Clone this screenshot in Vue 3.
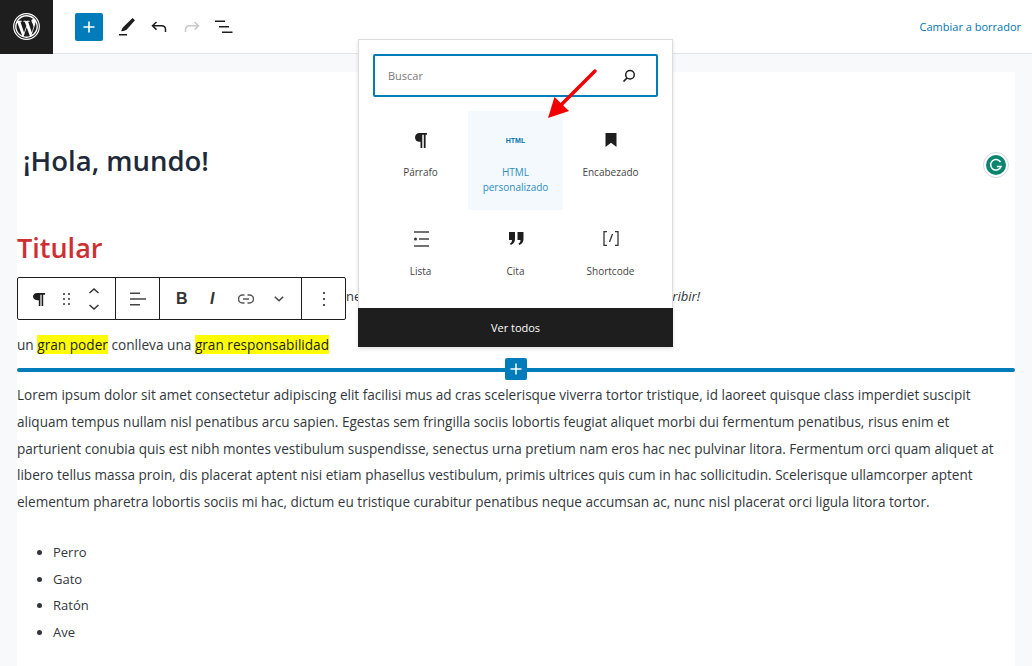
<script setup>
const blocks = [
  { label: "Párrafo", icon: "para" },
  { label: "HTML personalizado", icon: "html", active: true },
  { label: "Encabezado", icon: "bookmark" },
  { label: "Lista", icon: "list" },
  { label: "Cita", icon: "quote" },
  { label: "Shortcode", icon: "short" },
]
const animals = ["Perro", "Gato", "Ratón", "Ave"]
</script>

<template>
  <div class="page">
    <header class="topbar">
      <div class="wp-logo">
        <svg width="27" height="27" viewBox="0 0 28 28">
          <circle cx="14" cy="14" r="13.300" fill="none" stroke="#fff" stroke-width="1.200" />
          <circle cx="14" cy="14" r="11.800" fill="#fff" />
          <path fill="#1e1e1e" d="M3.600 14c0 4.100 2.400 7.700 5.900 9.400L4.500 9.800C3.900 11.100 3.600 12.500 3.600 14zM21 13.500c0-1.300-.5-2.200-.9-2.900-.5-.9-1-1.600-1-2.500 0-1 .8-1.900 1.800-1.900h.1C19 4.400 16.600 3.500 14 3.500c-3.600 0-6.800 1.900-8.700 4.700h.7c1.100 0 2.800-.1 2.800-.1.600 0 .6.800.1.900 0 0-.6.100-1.200.1l3.800 11.300 2.300-6.900-1.600-4.400c-.6 0-1.100-.1-1.100-.1-.6 0-.5-.9.100-.9 0 0 1.700.1 2.800.1s2.800-.1 2.800-.1c.6 0 .6.800.1.900 0 0-.6.100-1.200.1l3.800 11.200 1-3.500c.5-1.400.8-2.400.8-3.300zM14.200 14.900l-3.100 9.100c.9.300 1.900.4 2.900.4 1.200 0 2.400-.2 3.500-.6l-.1-.1-3.200-8.800zM23.100 9c0 .3.100.7.100 1.100 0 1-.2 2.200-.8 3.600l-3.200 9.200c3.100-1.800 5.200-5.200 5.200-9 0-1.800-.5-3.500-1.300-4.900z" />
        </svg>
      </div>
      <div class="tools">
        <button class="add-btn">
          <svg width="14" height="14" viewBox="0 0 14 14"><path d="M7 1.500v11M1.500 7h11" stroke="#fff" stroke-width="1.600" /></svg>
        </button>
        <svg class="tool tool-pen" width="18" height="20" viewBox="0 0 18 20">
          <path fill="#1e1e1e" d="M14.500 1 17 3.200 8.600 12.800 5.600 14 3.200 14.200 4 11.800 5.600 9.700z" />
          <rect x="1" y="17" width="8" height="1.500" fill="#1e1e1e" />
        </svg>
        <svg class="tool tool-undo" width="16" height="12" viewBox="0 0 16 12">
          <path fill="none" stroke="#1e1e1e" stroke-width="1.500" d="M5.500 1 1.500 4.800 5.500 8.600M1.500 4.800h9c2.300 0 4 1.600 4 3.800V11" />
        </svg>
        <svg class="tool tool-redo" width="16" height="12" viewBox="0 0 16 12">
          <path fill="none" stroke="#c9c9c9" stroke-width="1.500" d="M10.500 1 14.500 4.800 10.500 8.600M14.500 4.800h-9c-2.300 0-4 1.600-4 3.800V11" />
        </svg>
        <svg class="tool tool-outline" width="18" height="14" viewBox="0 0 18 14">
          <path stroke="#1e1e1e" stroke-width="1.500" d="M0 1.300h10M4 6.700h10M7 12.200h10.500" />
        </svg>
      </div>
      <a class="draft">Cambiar a borrador</a>
    </header>

    <main class="canvas">
      <article class="sheet">
        <h1 class="post-title">¡Hola, mundo!</h1>
        <h2 class="heading">Titular</h2>
        <p class="hidden-line"><span>ne</span><em>ribir!</em></p>
        <p class="marked">un <mark>gran poder</mark> conlleva una <mark>gran responsabilidad</mark></p>
        <div class="divider">
          <button class="inline-add">
            <svg width="12" height="12" viewBox="0 0 12 12"><path d="M6 .5v11M.5 6h11" stroke="#fff" stroke-width="1.500" /></svg>
          </button>
        </div>
        <p class="lorem">Lorem ipsum dolor sit amet consectetur adipiscing elit facilisi mus ad cras scelerisque viverra tortor tristique, id laoreet quisque class imperdiet suscipit aliquam tempus nullam nisl penatibus arcu sapien. Egestas sem fringilla sociis lobortis feugiat aliquet morbi dui fermentum penatibus, risus enim et parturient conubia quis est nibh montes vestibulum suspendisse, senectus urna pretium nam eros hac nec pulvinar litora. Fermentum orci quam aliquet at libero tellus massa proin, dis placerat aptent nisi etiam phasellus vestibulum, primis ultrices quis cum in hac sollicitudin. Scelerisque ullamcorper aptent elementum pharetra lobortis sociis mi hac, dictum eu tristique curabitur penatibus neque accumsan ac, nunc nisl placerat orci ligula litora tortor.</p>
        <ul class="animals">
          <li v-for="a in animals" :key="a">{{ a }}</li>
        </ul>

        <div class="grammarly">
          <svg width="20" height="20" viewBox="0 0 20 20">
            <circle cx="10" cy="10" r="10" fill="#0b8570" />
            <path fill="none" stroke="#fff" stroke-width="1.500" d="M14.500 7A5.300 5.300 0 1 0 15 11.500H10.800" />
          </svg>
        </div>
      </article>
    </main>

    <div class="block-toolbar">
      <div class="tb-group tb-first">
        <svg width="14" height="14" viewBox="0 0 14 14"><path fill="#1e1e1e" d="M5 1h8v1.700h-1.800V14H9.600V2.700H8.400V14H6.800V8.200H5C2.800 8.200 1 6.600 1 4.600S2.800 1 5 1z" /></svg>
        <svg width="8" height="14" viewBox="0 0 8 14"><path fill="#666" d="M0 1h2v2H0zM5 1h2v2H5zM0 6h2v2H0zM5 6h2v2H5zM0 11h2v2H0zM5 11h2v2H5z" /></svg>
        <svg width="12" height="24" viewBox="0 0 12 24"><path fill="none" stroke="#333" stroke-width="1.500" d="M1.500 6 6 2l4.500 4M1.500 18 6 22l4.500-4" /></svg>
      </div>
      <div class="tb-group tb-align">
        <svg width="16" height="14" viewBox="0 0 16 14"><path stroke="#444" stroke-width="1.500" d="M0 1.200h10M0 7h16M0 12.800h10" /></svg>
      </div>
      <div class="tb-group tb-format">
        <span class="fmt-b">B</span>
        <span class="fmt-i">I</span>
        <svg width="16" height="10" viewBox="0 0 16 10"><path fill="none" stroke="#555" stroke-width="1.500" d="M6.500 1H4.500a4 4 0 0 0 0 8h2M9.500 1h2a4 4 0 0 1 0 8h-2M5 5h6" /></svg>
        <svg width="10" height="6" viewBox="0 0 10 6"><path fill="none" stroke="#444" stroke-width="1.500" d="M.8.800 5 4.800 9.200.800" /></svg>
      </div>
      <div class="tb-group tb-more">
        <svg width="4" height="14" viewBox="0 0 4 14"><path fill="#555" d="M1 0h2v2H1zM1 6h2v2H1zM1 12h2v2H1z" /></svg>
      </div>
    </div>

    <div class="inserter">
      <div class="search">
        <span class="placeholder">Buscar</span>
        <svg width="14" height="14" viewBox="0 0 14 14"><circle cx="8" cy="5.700" r="4.300" fill="none" stroke="#1e1e1e" stroke-width="1.500" /><path stroke="#1e1e1e" stroke-width="1.700" d="M5 9 1.500 12.500" /></svg>
      </div>
      <div class="block-grid">
        <div v-for="b in blocks" :key="b.label" class="block-item" :class="{ active: b.active }">
          <div class="block-icon">
            <svg v-if="b.icon === 'para'" width="14" height="17" viewBox="0 0 14 17"><path fill="#1e1e1e" d="M5.500 1H13v1.700h-1.400V16H9.800V2.700H8.300V16H6.500V9.800h-1C3 9.800 1 7.900 1 5.400S3 1 5.500 1z" /></svg>
            <span v-else-if="b.icon === 'html'" class="html-icon">HTML</span>
            <svg v-else-if="b.icon === 'bookmark'" width="12" height="14" viewBox="0 0 12 14"><path fill="#1e1e1e" d="M.5 0h11v14L6 9.800.5 14z" /></svg>
            <svg v-else-if="b.icon === 'list'" width="16" height="16" viewBox="0 0 16 16"><path stroke="#444" stroke-width="1.300" d="M1 1h15M6 8h10M1 15h15" /><circle cx="2.500" cy="8" r="1.500" fill="#333" /></svg>
            <svg v-else-if="b.icon === 'quote'" width="16" height="14" viewBox="0 0 16 14"><path fill="#1e1e1e" d="M1 0h6v7c0 3-1.500 5-4.200 6l-.8-1.400C3.300 11 4 9.800 4 8H1zM9.500 0h6v7c0 3-1.500 5-4.200 6l-.8-1.400c1.300-.6 2-1.800 2-3.600h-3z" /></svg>
            <svg v-else width="16" height="15" viewBox="0 0 16 15"><path fill="none" stroke="#333" stroke-width="1.300" d="M4 .7H1v13.600h3M12 .7h3v13.600h-3M9.500 3 6.500 11" /></svg>
          </div>
          <div class="block-label">{{ b.label }}</div>
        </div>
      </div>
      <div class="see-all">Ver todos</div>
    </div>

    <svg class="red-arrow" width="54" height="54" viewBox="0 0 54 54">
      <path stroke="#f20000" stroke-width="3.500" stroke-linecap="round" d="M49 3 14 38" />
      <path fill="#f20000" d="M2 50 8.500 29 23 43z" />
    </svg>
  </div>
</template>

<style>
html, body {
  margin: 0;
  background: #f8f9fb;
}
</style>

<style scoped>
.page {
  position: relative;
  width: 1032px;
  height: 666px;
  overflow: hidden;
  background: #f8f9fb;
  font-family: "Open Sans", "Noto Sans", sans-serif;
  color: #32373c;
}

.topbar {
  display: flex;
  align-items: center;
  height: 53px;
  background: #fff;
  border-bottom: 1px solid #e2e4e7;
}

.wp-logo {
  display: flex;
  align-items: center;
  justify-content: center;
  width: 53px;
  height: 54px;
  background: #1e1e1e;
}

.tools {
  display: flex;
  align-items: center;
  margin-left: 22px;
}

.add-btn {
  display: flex;
  align-items: center;
  justify-content: center;
  width: 28px;
  height: 28px;
  padding: 0;
  border: 0;
  border-radius: 2px;
  background: #007cba;
}

.tool-pen { margin-left: 15px; }
.tool-undo { margin-left: 15px; }
.tool-redo { margin-left: 17px; }
.tool-outline { margin-left: 15px; }

.draft {
  margin-left: auto;
  margin-right: 11px;
  font-size: 11px;
  color: #0075af;
}

.canvas {
  padding: 18px 17px 0;
}

.sheet {
  position: relative;
  height: 600px;
  background: #fff;
}

.post-title {
  margin: 0;
  padding: 71px 0 0 6px;
  font-size: 27.500px;
  line-height: 36px;
  font-weight: 600;
  color: #1e2a3a;
}

.heading {
  margin: 0;
  padding-top: 50px;
  font-size: 27px;
  line-height: 38px;
  font-weight: 600;
  color: #cd2f33;
}

.hidden-line {
  display: flex;
  justify-content: space-between;
  margin: 0;
  padding: 20px 315px 0 329px;
  font-size: 13px;
  line-height: 18px;
  white-space: nowrap;
}

.marked {
  margin: 0;
  padding-top: 31px;
  font-size: 13.650px;
  line-height: 18px;
}

mark {
  background: #ffff00;
  color: #222;
}

.divider {
  position: relative;
  height: 4px;
  margin-top: 14px;
  background: #007cba;
  border-radius: 2px;
}

.inline-add {
  position: absolute;
  left: 488px;
  top: -10px;
  display: flex;
  align-items: center;
  justify-content: center;
  width: 22px;
  height: 22px;
  padding: 0;
  border: 0;
  border-radius: 2px;
  background: #007cba;
}

.lorem {
  margin: 0;
  padding: 10px 15px 0 0;
  font-size: 13.550px;
  line-height: 26.800px;
}

.animals {
  margin: 23px 0 0;
  padding-left: 36px;
  font-size: 13px;
  line-height: 26.600px;
}

.grammarly {
  position: absolute;
  left: 966px;
  top: 80px;
  display: flex;
  align-items: center;
  justify-content: center;
  width: 26px;
  height: 26px;
  box-sizing: border-box;
  border: 1px solid #d5d8e2;
  border-radius: 50%;
  background: #fff;
}

.block-toolbar {
  position: absolute;
  left: 17px;
  top: 277px;
  display: flex;
  height: 43px;
  box-sizing: border-box;
  border: 1px solid #1e1e1e;
  border-radius: 2px;
  background: #fff;
}

.tb-group {
  display: flex;
  align-items: center;
  box-sizing: border-box;
  border-right: 1px solid #1e1e1e;
}

.tb-group:last-child {
  border-right: 0;
}

.tb-first {
  width: 98px;
  padding-left: 14px;
  gap: 17px;
}

.tb-align {
  width: 44px;
  justify-content: center;
}

.tb-format {
  width: 142px;
  padding-left: 16px;
}

.fmt-b {
  width: 34px;
  font-family: "Liberation Sans", sans-serif;
  font-size: 16px;
  font-weight: 700;
  color: #333;
}

.fmt-i {
  width: 28px;
  font-family: "Liberation Sans", sans-serif;
  font-size: 16px;
  font-weight: 700;
  font-style: italic;
  color: #333;
}

.tb-format svg:last-child {
  margin-left: 20px;
}

.tb-more {
  width: 43px;
  justify-content: center;
}

.inserter {
  position: absolute;
  left: 358px;
  top: 39px;
  width: 315px;
  height: 308px;
  box-sizing: border-box;
  display: flex;
  flex-direction: column;
  border: 1px solid #dcdcde;
  background: #fff;
  box-shadow: 0 2px 4px rgba(0, 0, 0, 0.12);
}

.search {
  display: flex;
  align-items: center;
  justify-content: space-between;
  margin: 14px 14px 0 14px;
  height: 44px;
  box-sizing: border-box;
  padding: 0 20px 0 13px;
  border: 2px solid #007cba;
  border-radius: 2px;
}

.placeholder {
  font-size: 11px;
  color: #7a7a7a;
}

.block-grid {
  display: grid;
  grid-template-columns: repeat(3, 95px);
  grid-auto-rows: 98.500px;
  margin: 14px 0 0 14px;
}

.block-item {
  display: flex;
  flex-direction: column;
  align-items: center;
  padding-top: 19px;
  box-sizing: border-box;
  color: #444;
}

.block-item.active {
  background: #f3f9fc;
  color: #2e8dc0;
}

.block-icon {
  display: flex;
  align-items: center;
  justify-content: center;
  height: 20px;
}

.html-icon {
  font-family: "Liberation Sans", sans-serif;
  font-size: 7px;
  font-weight: 700;
  color: #0075af;
}

.block-label {
  margin-top: 15px;
  width: 80px;
  text-align: center;
  font-size: 10px;
  line-height: 15px;
}

.see-all {
  margin: auto -1px -1px;
  height: 40px;
  display: flex;
  align-items: center;
  justify-content: center;
  background: #1e1e1e;
  color: #fff;
  font-size: 11px;
  font-weight: 500;
}

.red-arrow {
  position: absolute;
  left: 546px;
  top: 68px;
}
</style>
